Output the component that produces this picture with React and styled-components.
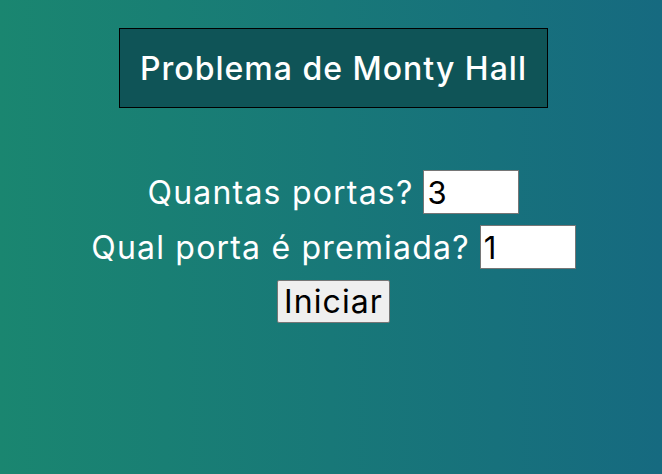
import React, { useState } from "react";
import styled, { createGlobalStyle } from "styled-components";

const GlobalStyle = createGlobalStyle`
  html, body {
    margin: 0;
    padding: 0;
  }
  body {
    font-family: "Inter", "Open Sans", sans-serif;
  }
`;

const Page = styled.div`
  min-height: 100vh;
  box-sizing: border-box;
  background: linear-gradient(to right, #1a8670, #166a80);
  display: flex;
  flex-direction: column;
  align-items: center;
  padding: 28px 0 0 5px;
  color: #fff;
`;

const Title = styled.h1`
  margin: 0;
  box-sizing: border-box;
  width: 429px;
  height: 80px;
  display: flex;
  align-items: center;
  justify-content: center;
  background: #0f5457;
  border: 1px solid #000;
  font-size: 32px;
  font-weight: 500;
  letter-spacing: 1px;
`;

const Form = styled.div`
  margin-top: 62px;
  display: flex;
  flex-direction: column;
  align-items: center;
  gap: 11px;
`;

const Row = styled.label`
  display: flex;
  align-items: center;
  gap: 10px;
  font-size: 32px;
  letter-spacing: 1.2px;
`;

const Field = styled.input`
  box-sizing: border-box;
  width: 96px;
  height: 44px;
  padding: 0 3px;
  border: 1px solid #767676;
  background: #fff;
  color: #000;
  font-family: inherit;
  font-size: 31px;
  outline: none;
`;

const Button = styled.button`
  box-sizing: border-box;
  height: 43px;
  padding: 0 6px;
  background: #efefef;
  border: 1px solid #767676;
  border-radius: 2px;
  color: #000;
  font-family: inherit;
  font-size: 32px;
  letter-spacing: 1.1px;
`;

export default function App() {
  const [doors, setDoors] = useState("3");
  const [prize, setPrize] = useState("1");

  return (
    <React.Fragment>
      <GlobalStyle />
      <Page>
        <Title>Problema de Monty Hall</Title>
        <Form>
          <Row>
            Quantas portas?
            <Field value={doors} onChange={e => setDoors(e.target.value)} />
          </Row>
          <Row>
            Qual porta é premiada?
            <Field value={prize} onChange={e => setPrize(e.target.value)} />
          </Row>
          <Button>Iniciar</Button>
        </Form>
      </Page>
    </React.Fragment>
  );
}
